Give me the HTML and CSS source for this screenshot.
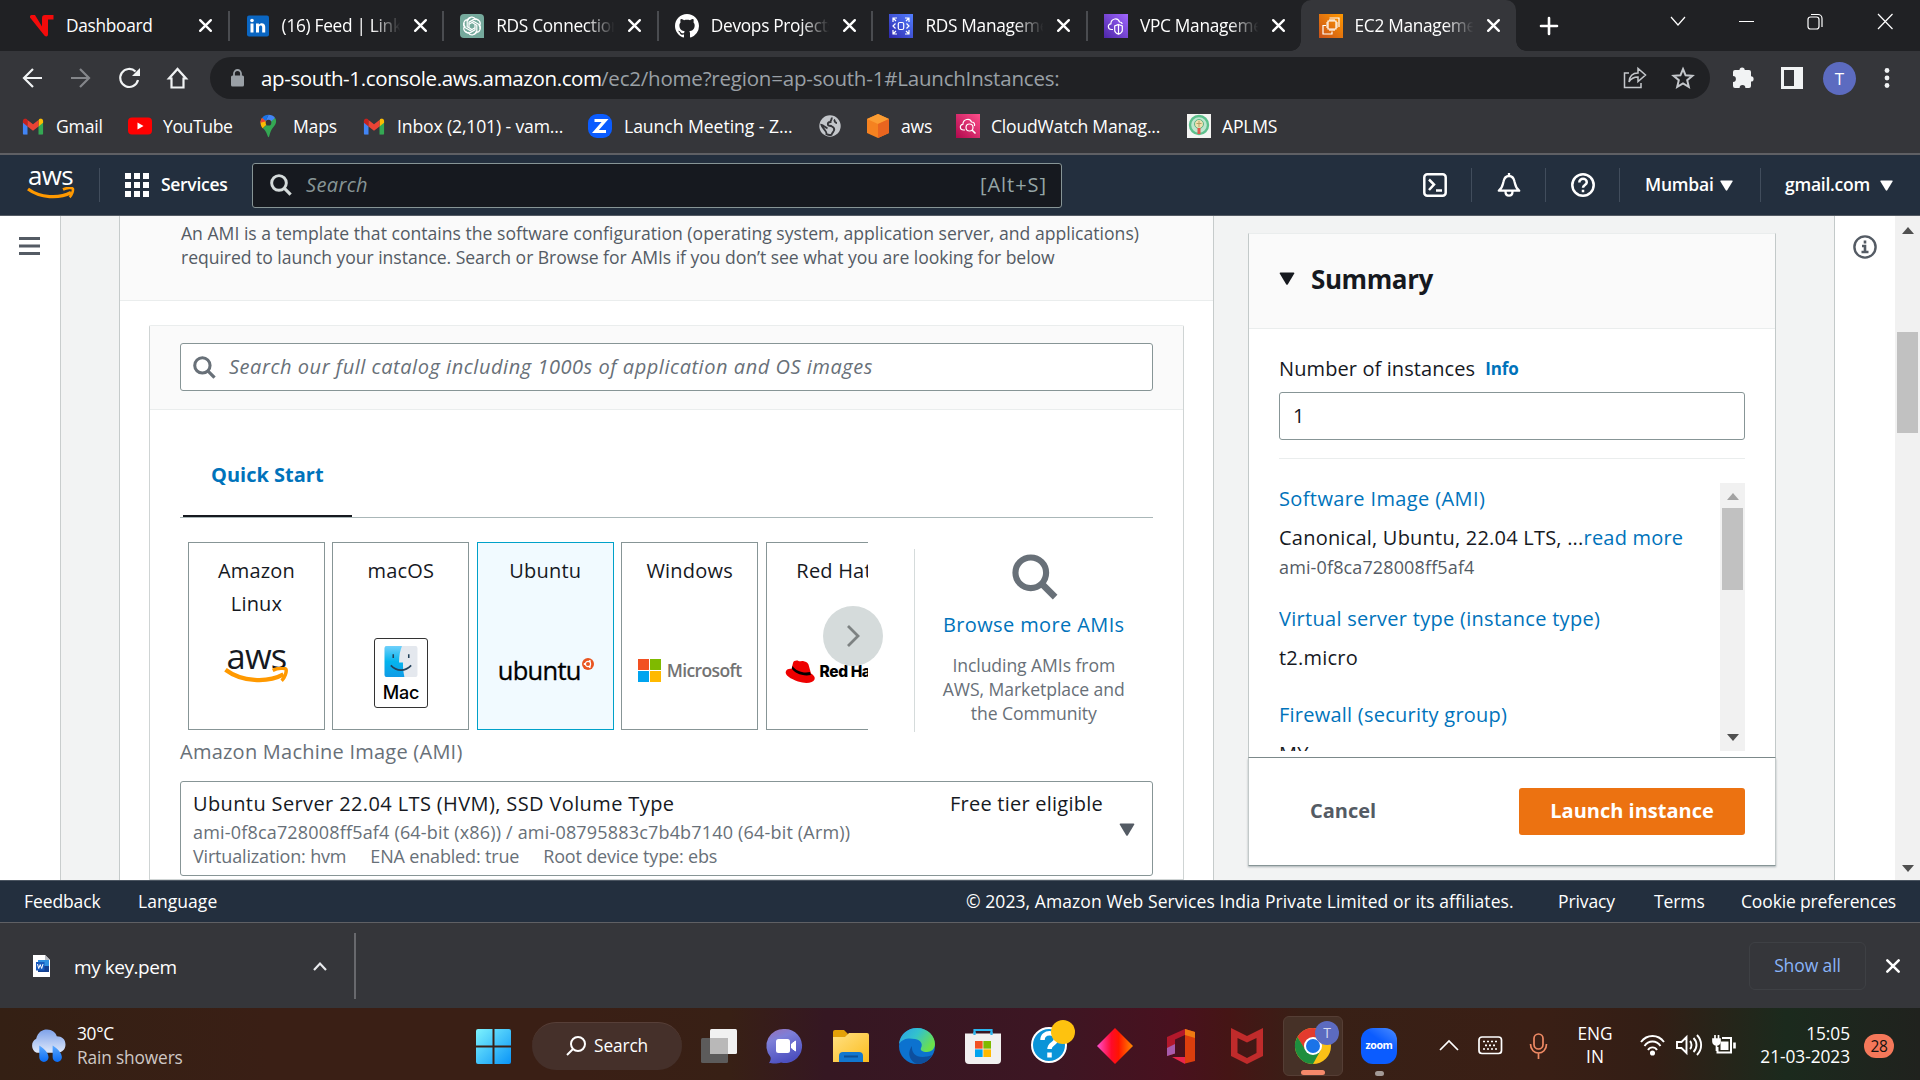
FILE: index.html
```
<!DOCTYPE html>
<html lang="en">
<head>
<meta charset="utf-8">
<title>EC2 Management Console</title>
<link rel="stylesheet" href="styles.css">
</head>
<body>
<svg class="defs" width="0" height="0" aria-hidden="true">
  <defs>
    <linearGradient id="gPurple" x1="0" y1="1" x2="1" y2="0"><stop offset="0" stop-color="#4d27a8"/><stop offset="1" stop-color="#a166ff"/></linearGradient>
    <linearGradient id="gBlue" x1="0" y1="1" x2="1" y2="0"><stop offset="0" stop-color="#2e27ad"/><stop offset="1" stop-color="#527fff"/></linearGradient>
    <linearGradient id="gOrange" x1="0" y1="1" x2="1" y2="0"><stop offset="0" stop-color="#c8511b"/><stop offset="1" stop-color="#f90"/></linearGradient>
    <linearGradient id="gPink" x1="0" y1="1" x2="1" y2="0"><stop offset="0" stop-color="#b0084d"/><stop offset="1" stop-color="#ff4f8b"/></linearGradient>
    <linearGradient id="gWin" x1="0" y1="0" x2="1" y2="1"><stop offset="0" stop-color="#7df3fd"/><stop offset="1" stop-color="#0a94f7"/></linearGradient>
    <linearGradient id="gCloud" x1="0" y1="0" x2="0" y2="1"><stop offset="0" stop-color="#7ea2ea"/><stop offset="1" stop-color="#dfe8fa"/></linearGradient>
    <linearGradient id="gDrop" x1="0" y1="0" x2="0" y2="1"><stop offset="0" stop-color="#5aa8ff"/><stop offset="1" stop-color="#0a6cf5"/></linearGradient>
    <linearGradient id="gFolder" x1="0" y1="0" x2="1" y2="1"><stop offset="0" stop-color="#ffe083"/><stop offset="1" stop-color="#fbbd1e"/></linearGradient>
    <linearGradient id="gChat" x1="0" y1="0" x2="0.4" y2="1"><stop offset="0" stop-color="#9a70b5"/><stop offset="0.35" stop-color="#7d7fd8"/><stop offset="1" stop-color="#4d50c0"/></linearGradient>
    <linearGradient id="gEdge" x1="0" y1="0" x2="1" y2="0.5"><stop offset="0" stop-color="#2a9fe8"/><stop offset="0.5" stop-color="#33c2cd"/><stop offset="1" stop-color="#6be04c"/></linearGradient>
    <linearGradient id="gDiamond" x1="0" y1="0" x2="1" y2="0"><stop offset="0" stop-color="#ff4fd0"/><stop offset="0.4" stop-color="#ff0a2a"/><stop offset="0.6" stop-color="#ff1500"/><stop offset="1" stop-color="#ff8a00"/></linearGradient>
    <linearGradient id="gMac" x1="0" y1="0" x2="0" y2="1"><stop offset="0" stop-color="#6fd0fb"/><stop offset="0.5" stop-color="#04b4ee"/><stop offset="1" stop-color="#0f9be6"/></linearGradient>
    <symbol id="x" viewBox="0 0 14 14"><path d="M2 2l10 10M12 2L2 12" stroke="currentColor" stroke-width="2.2" stroke-linecap="round" fill="none"/></symbol>
    <symbol id="gmail" viewBox="0 0 24 18"><path d="M1 3.5V17a1 1 0 0 0 1 1h4V8z" fill="#4285f4"/><path d="M23 3.5V17a1 1 0 0 1-1 1h-4V8z" fill="#34a853"/><path d="M18 2.5V9l5-4V2.800C23 .6 20.500-.6 18.800.8z" fill="#fbbc04"/><path d="M1 2.800V5l5 4V2L5.200.8C3.500-.6 1 .6 1 2.800z" fill="#c5221f"/><path d="M6 9V2l6 4.500L18 2v7l-6 4.500z" fill="#ea4335"/></symbol>
    <symbol id="smile" viewBox="0 0 48 16"><path d="M1 2c12 9 31 10 43 3.500" stroke="#f90" stroke-width="3.200" fill="none"/><path d="M36 2.500c4-2 9-2 9.800-.8.8 1.500-1 6.500-3.200 8.500" stroke="#f90" stroke-width="2.600" fill="none"/></symbol>
    <symbol id="mag" viewBox="0 0 24 24"><circle cx="9.800" cy="9.800" r="8" fill="none" stroke="currentColor" stroke-width="3.200"/><path d="M15.200 15.200L22.500 22.500" stroke="currentColor" stroke-width="3.400"/></symbol>
    <symbol id="down" viewBox="0 0 14 12"><path d="M1 .5h12a.8.8 0 0 1 .6 1.200L7.800 11.200a1 1 0 0 1-1.600 0L.4 1.700A.8.8 0 0 1 1 .5z" fill="currentColor"/></symbol>
    <symbol id="ms" viewBox="0 0 22 22"><path d="M0 0h10.500v10.500H0z" fill="#f25022"/><path d="M11.500 0H22v10.500H11.500z" fill="#7fba00"/><path d="M0 11.500h10.500V22H0z" fill="#00a4ef"/><path d="M11.500 11.500H22V22H11.500z" fill="#ffb900"/></symbol>
  </defs>
</svg>

<header class="tabs">
  <div class="tab"><svg class="fav" viewBox="0 0 24 24"><path d="M1.500 1h3.500L12 12.500V4c0-2 1-3 3-3h8.500v4.500H18v15c0 2.500-3 2.500-4 .5L0 3.500C-.3 2 .5 1 1.500 1z" fill="#f40b0b"/></svg><span class="ttl">Dashboard</span><svg class="close"><use href="#x"/></svg></div>
  <div class="tab"><svg class="fav" viewBox="0 0 24 24"><rect x="1" y="1.500" width="22" height="21" rx="2" fill="#0a66c2"/><path d="M4.500 9.500h3v9h-3zM10 9.500h2.900v1.300c1.500-2.400 6.300-2 6.300 2v5.700h-3v-5c0-2.600-3.200-2.400-3.200 0v5h-3z" fill="#fff"/><circle cx="6" cy="6.500" r="1.800" fill="#fff"/></svg><span class="ttl">(16) Feed | LinkedIn</span><svg class="close"><use href="#x"/></svg></div>
  <div class="tab"><svg class="fav" viewBox="0 0 24 24"><path d="M4 0h16a4 4 0 0 1 4 4v20H4a4 4 0 0 1-4-4V4a4 4 0 0 1 4-4z" fill="#75a99c"/><g fill="none" stroke="#fff" stroke-width="1.200"><path id="pet" d="M8 6.500a4 4 0 0 1 7.500-1.200M9 13.700V8.200l4.800-2.800a3.800 3.800 0 0 1 4.700 1.200"/><use href="#pet" transform="rotate(60 12 12)"/><use href="#pet" transform="rotate(120 12 12)"/><use href="#pet" transform="rotate(180 12 12)"/><use href="#pet" transform="rotate(240 12 12)"/><use href="#pet" transform="rotate(300 12 12)"/></g></svg><span class="ttl">RDS Connection</span><svg class="close"><use href="#x"/></svg></div>
  <div class="tab"><svg class="fav" viewBox="0 0 16 16"><path fill="#fff" d="M8 0C3.580 0 0 3.580 0 8c0 3.540 2.290 6.530 5.470 7.590.4.070.55-.17.55-.38 0-.19-.01-.82-.01-1.490-2.010.37-2.530-.49-2.690-.94-.09-.23-.48-.94-.82-1.130-.28-.15-.68-.52-.01-.53.63-.01 1.080.58 1.230.82.72 1.210 1.870.87 2.330.66.07-.52.28-.87.51-1.070-1.780-.2-3.640-.89-3.640-3.950 0-.87.31-1.590.82-2.150-.08-.2-.36-1.020.08-2.120 0 0 .67-.21 2.200.82.64-.18 1.320-.27 2-.27s1.360.09 2 .27c1.530-1.040 2.200-.82 2.200-.82.44 1.100.16 1.920.08 2.120.51.56.82 1.270.82 2.150 0 3.070-1.870 3.750-3.650 3.950.29.25.54.73.54 1.480 0 1.070-.01 1.930-.01 2.200 0 .21.15.46.55.38A8.010 8.010 0 0 0 16 8c0-4.420-3.580-8-8-8z"/></svg><span class="ttl">Devops Projects</span><svg class="close"><use href="#x"/></svg></div>
  <div class="tab"><svg class="fav" viewBox="0 0 24 24"><path d="M0 0h24v24H0z" fill="url(#gBlue)"/><path d="M4 8V4h4M4 4l3 3M16 4h4v4M20 4l-3 3M4 16v4h4M4 20l3-3M20 16v4h-4M20 20l-3-3M6.500 9.500L4 12l2.500 2.500M17.500 9.500L20 12l-2.500 2.500" fill="none" stroke="#fff" stroke-width="1.200"/><rect x="9.300" y="8.500" width="5.400" height="7" rx="1.500" fill="none" stroke="#fff" stroke-width="1.200"/></svg><span class="ttl">RDS Management</span><svg class="close"><use href="#x"/></svg></div>
  <div class="tab last"><svg class="fav" viewBox="0 0 24 24"><path d="M0 0h24v24H0z" fill="url(#gPurple)"/><path d="M9 15.500H7.500c-4 0-4.200-5.500-.6-5.700C7 4.500 14 3 15.500 8c1.800 0 2.500.8 2.800 2M14.500 10.500l3.800 1.500v4.500c0 1.500-2 3-3.800 3.800-1.800-.8-3.800-2.300-3.800-3.800V12zM14.500 10.500v9.800" fill="none" stroke="#fff" stroke-width="1.200"/></svg><span class="ttl">VPC Management</span><svg class="close"><use href="#x"/></svg></div>
  <div class="tab active"><svg class="fav" viewBox="0 0 24 24"><path d="M0 0h24v24H0z" fill="url(#gOrange)"/><path d="M9 7h8v8H9zM11 7V5M13 7V5M15 7V5M11 17v-2M13 17v-2M15 17v-2M9 9H7M9 11H7M9 13H7M19 9h-2M19 11h-2M19 13h-2M10.500 4H20v9M7 11.500H4V20h9v-2.500" fill="none" stroke="#fff" stroke-width="1.200"/></svg><span class="ttl">EC2 Management</span><svg class="close"><use href="#x"/></svg></div>
  <svg class="plus" viewBox="0 0 18 18"><path d="M9 1v16M1 9h16" stroke="#fff" stroke-width="2.600" stroke-linecap="round"/></svg>
  <svg class="winctl" viewBox="0 0 224 18" fill="none" stroke="#fff" stroke-width="1.200"><path d="M1 4l7 8 7-8M69 8.500h15M208 1l14.500 15M222.500 1L208 16"/><rect x="138" y="4" width="11" height="12" rx="2.500"/><path d="M141 1.500h7a4 4 0 0 1 4 4V14"/></svg>
</header>

<div class="toolbar">
  <svg class="nav" viewBox="0 0 168 22" fill="none" stroke="#f1f3f4" stroke-width="2.200"><path d="M20 11H2M11 2L2 11l9 9"/><path d="M49 11h17M58 2l9 9-9 9" stroke="#84868a"/><path d="M113.500 4.500A9 9 0 1 0 116 13"/><path d="M118 1v8h-8z" fill="#f1f3f4" stroke="none"/><path d="M149.500 20.500v-9H147L155.500 2l8.500 9.500h-2.500v9z"/></svg>
  <div class="omni">
    <svg class="lock" viewBox="0 0 13 18"><rect y="6.500" width="13" height="11" rx="1.500" fill="#9aa0a6"/><path d="M3 7V4.500a3.500 3.500 0 0 1 7 0V7" fill="none" stroke="#9aa0a6" stroke-width="1.800"/></svg>
    <span class="host">ap-south-1.console.aws.amazon.com</span><span class="path">/ec2/home?region=ap-south-1#LaunchInstances:</span>
    <svg class="share" viewBox="0 0 24 22"><path d="M6 6H1.500v14.500H18V16M6 15c.5-6 4-9 9-9V1.500L22.500 8 15 14.500V10c-4 0-7 1.500-9 5z" fill="none" stroke="#c4c7cb" stroke-width="1.500"/></svg>
    <svg class="star" viewBox="0 0 22 22"><path d="M11 2l2.600 6.300 6.800.5-5.200 4.400 1.600 6.600-5.800-3.500-5.800 3.500 1.600-6.600L1.600 8.800l6.800-.5z" fill="none" stroke="#c4c7cb" stroke-width="2"/></svg>
  </div>
  <svg class="puz" viewBox="0 0 22 22"><path d="M2 4h4.500a2.600 2.600 0 0 1 5.200 0H16a2 2 0 0 1 2 2v4.300a2.600 2.600 0 0 1 0 5.200V20a2 2 0 0 1-2 2h-3.600a2.900 2.900 0 0 0-5.800 0H2a2 2 0 0 1-2-2v-4.100a2.900 2.900 0 0 0 0-5.800V6a2 2 0 0 1 2-2z" fill="#f1f3f4"/></svg>
  <svg class="side" viewBox="0 0 22 22"><path fill-rule="evenodd" d="M0 0h22v22H0zM3 3v16h10V3z" fill="#f1f3f4"/></svg>
  <span class="avatar">T</span>
  <svg class="dots" viewBox="0 0 6 20" fill="#f1f3f4"><circle cx="3" cy="2.500" r="2.400"/><circle cx="3" cy="10" r="2.400"/><circle cx="3" cy="17.500" r="2.400"/></svg>
</div>

<nav class="bookmarks">
  <span class="bm b1"><svg viewBox="0 0 24 18" class="gm"><use href="#gmail"/></svg>Gmail</span>
  <span class="bm b2"><svg viewBox="0 0 24 18" class="yt"><rect y=".5" width="24" height="17" rx="4" fill="#f00"/><path d="M9.500 5.500v7l6-3.500z" fill="#fff"/></svg>YouTube</span>
  <span class="bm b3"><svg viewBox="0 0 18 24" class="mp"><path d="M9 0L5.500 7.500 12 9.500l4-6A8.500 8.500 0 0 0 9 0z" fill="#4285f4"/><path d="M2.200 3.500C-.5 7 .5 12 3 14.500L12 6 6 6.500z" fill="#fbbc04"/><path d="M9 0a8.500 8.500 0 0 0-6.800 3.500L6 7z" fill="#1a73e8"/><path d="M2.200 3.500C1 5 .5 6.800.5 8.500L6.500 7z" fill="#ea4335"/><path d="M16 3.500c3 5-1 8.500-3.500 12C10.500 18.500 10 24 9 24s-1.500-6-6-9.500z" fill="#34a853"/><circle cx="9" cy="8.500" r="3" fill="#35363a"/></svg>Maps</span>
  <span class="bm b4"><svg viewBox="0 0 24 18" class="gm"><use href="#gmail"/></svg>Inbox (2,101) - vam...</span>
  <span class="bm b5"><svg viewBox="0 0 24 24" class="sq"><rect width="24" height="24" rx="9" fill="#0b5cff"/><path d="M6.500 6.500H17L7.500 17.500H18" fill="none" stroke="#fff" stroke-width="3.200"/></svg>Launch Meeting - Z...</span>
  <span class="bm b6"><svg viewBox="0 0 22 22" class="gl"><circle cx="11" cy="11" r="10.700" fill="#c3c6ca"/><path d="M12.500 2.500c1 2-1 2.500-1 4.500-2.500 0-3 1.200-2.500 3 .3 1 2.500.5 4 1.500 1.500.8 2.800 2 2 4-.6 1.500-1.800 2-2.500 4.300-1.500.4-3.500.2-5-.6.5-2-1-3-2-4.500C4.500 13.500 3 12 2.500 10c2 .5 4 2.800 6 3.200M16 4.500c-1.500 1.500.5 3.500 2 3.500" fill="none" stroke="#35363a" stroke-width="1.900"/></svg></span>
  <span class="bm b7"><svg viewBox="0 0 24 24" class="sq"><path d="M12 0l11 5v14l-11 5L1 19V5z" fill="#f58220"/><path d="M12 0l11 5-11 5L1 5z" fill="#fb9d33"/><path d="M12 10l11-5v14l-11 5z" fill="#e9651f"/></svg>aws</span>
  <span class="bm b8"><svg viewBox="0 0 24 24" class="sq"><path d="M0 0h24v24H0z" fill="url(#gPink)"/><path d="M9 16H7.500c-4 0-4.200-5.500-.6-5.700C7 5 14 3.500 15.500 8c2.500 0 3.500 1.800 3 4" fill="none" stroke="#fff" stroke-width="1.200"/><circle cx="13.500" cy="13.500" r="3.500" fill="none" stroke="#fff" stroke-width="1.200"/><path d="M16 16l3.500 3.500" stroke="#fff" stroke-width="1.600"/></svg>CloudWatch Manag...</span>
  <span class="bm b9"><svg viewBox="0 0 24 24" class="sq"><path d="M0 0h24v24H0z" fill="#f4f4f2"/><circle cx="12" cy="11" r="9" fill="#bfe6cf" stroke="#5cc08c" stroke-width="2.400"/><circle cx="12" cy="10" r="4.500" fill="#efe0b0" stroke="#5cb585"/><path d="M12 7v6M9.500 9.500h5" stroke="#b3a165"/><path d="M12 14v6" stroke="#e2564c" stroke-width="3"/></svg>APLMS</span>
</nav>

<header class="aws">
  <div class="logo"><span>aws</span><svg viewBox="0 0 48 16"><use href="#smile"/></svg></div>
  <i class="sep s1"></i>
  <svg class="grid9" viewBox="0 0 24 24" fill="#fff"><path d="M0 0h6v6H0zM9 0h6v6H9zM18 0h6v6h-6zM0 9h6v6H0zM9 9h6v6H9zM18 9h6v6h-6zM0 18h6v6H0zM9 18h6v6H9zM18 18h6v6h-6z"/></svg>
  <span class="svc">Services</span>
  <div class="asearch"><svg class="m20"><use href="#mag"/></svg><em>Search</em><span class="alt">[Alt+S]</span></div>
  <svg class="ai" viewBox="0 0 24 24" fill="none" stroke="#fff" stroke-width="2.500"><rect x="1.300" y="1.300" width="21.400" height="21.400" rx="3"/><path d="M6 6.500l5 5-5 5.500M13 17.500h6"/></svg>
  <i class="sep"></i>
  <svg class="ai" viewBox="0 0 24 24" fill="none" stroke="#fff" stroke-width="2.300"><path d="M1.800 17.700C5.500 15 5.500 12.500 6.500 8.500 7.300 4.800 9.500 3 12 3s4.700 1.800 5.500 5.500c1 4 1 6.500 4.700 9.200zM12 0v3M8.500 18.500c0 5.500 7 5.500 7 0" stroke-linejoin="round"/></svg>
  <i class="sep"></i>
  <svg class="ai" viewBox="0 0 24 24" fill="none" stroke="#fff" stroke-width="2.500"><circle cx="12" cy="12" r="10.700"/><path d="M8.300 9.500c0-5 7.500-4.600 7.500-.3 0 2.800-3.800 2.800-3.800 5.600M12 16.700v2.600"/></svg>
  <i class="sep"></i>
  <span class="mum">Mumbai</span><svg class="tri"><use href="#down"/></svg>
  <i class="sep s2"></i>
  <span class="acct">gmail.com</span><svg class="tri"><use href="#down"/></svg>
</header>

<main class="console">
  <aside class="left"><svg viewBox="0 0 21 18"><path d="M0 1.500h21M0 9h21M0 16.500h21" stroke="#545b64" stroke-width="2.800"/></svg></aside>
  <section class="card">
    <div class="intro">An AMI is a template that contains the software configuration (operating system, application server, and applications)<br><span>required to launch your instance. Search or Browse for AMIs if you don’t see what you are looking for below</span></div>
    <div class="inner">
      <div class="cat"><div class="catbox"><svg class="m22"><use href="#mag"/></svg><em>Search our full catalog including 1000s of application and OS images</em></div></div>
      <div class="ibody">
        <div class="qs"><span>Quick Start</span></div>
        <div class="osrow">
          <div class="oslist">
            <div class="os">Amazon<br>Linux<div class="awslogo"><span>aws</span><svg viewBox="0 0 48 16"><use href="#smile"/></svg></div></div>
            <div class="os">macOS<div class="mac"><svg viewBox="0 0 34 32"><rect width="34" height="32" rx="2" fill="#e4e8ee"/><path d="M2 0h16c-2 5-3 10-3 17h4c0 6 .5 10 1.500 15H2a2 2 0 0 1-2-2V2a2 2 0 0 1 2-2z" fill="url(#gMac)"/><path d="M9 8.500v4M25 8.500v4" stroke="#23415a" stroke-width="1.600"/><path d="M6.500 20c6 6.500 15 6.500 21 0" fill="none" stroke="#23415a" stroke-width="1.700"/></svg><span>Mac</span></div></div>
            <div class="os sel">Ubuntu<div class="ubu"><span>ubuntu</span><svg viewBox="0 0 12 12"><circle cx="6" cy="6" r="6" fill="#e95420"/><circle cx="6" cy="6" r="2.600" fill="none" stroke="#fff" stroke-width="1.200"/><circle cx="2.600" cy="6" r="1" fill="#fff"/><circle cx="7.800" cy="3" r="1" fill="#fff"/><circle cx="7.800" cy="9" r="1" fill="#fff"/></svg></div></div>
            <div class="os">Windows<div class="msl"><svg><use href="#ms"/></svg><span>Microsoft</span></div></div>
            <div class="os">Red Hat<div class="rh"><svg viewBox="0 0 30 23"><path d="M1 11c-2 4 5 8 12 10.500 8 2.500 15 1.500 16.500-2 1-2.500-1-4.500-3.500-6L23.500 4.500C22.500 2 20 1.500 18 1c-2-.5-3 1-4.500 0S8.500.5 8 3L6.500 9C4 8.500 2 9.500 1 11z" fill="#e00"/><path d="M6.800 8.500c2 4 11 8.500 19 6.500l-.8-3c-6 1.500-14-.5-17.500-6z" fill="#000"/></svg><span>Red Hat</span></div></div>
          </div>
          <div class="next"><svg viewBox="0 0 14 24"><path d="M2 2l10 10L2 22" fill="none" stroke="#7d8282" stroke-width="2.800"/></svg></div>
          <div class="browse"><svg class="m44"><use href="#mag"/></svg><b>Browse more AMIs</b><p>Including AMIs from<br>AWS, Marketplace and<br>the Community</p></div>
        </div>
        <div class="amil">Amazon Machine Image (AMI)</div>
        <div class="amibox">
          <div class="amitxt"><div class="a1"><span>Ubuntu Server 22.04 LTS (HVM), SSD Volume Type</span><span class="free">Free tier eligible</span></div><div class="a2">ami-0f8ca728008ff5af4 (64-bit (x86)) / ami-08795883c7b4b7140 (64-bit (Arm))</div><div class="a3"><span>Virtualization: hvm</span><span>ENA enabled: true</span><span>Root device type: ebs</span></div></div>
          <svg class="dtri"><use href="#down"/></svg>
        </div>
      </div>
    </div>
  </section>
  <section class="summary">
    <div class="stop">
      <h2><svg><use href="#down"/></svg>Summary</h2>
      <div class="sbody">
        <div class="num">Number of instances<b>Info</b></div>
        <div class="numbox">1</div>
        <div class="scroll">
          <div class="stext">
            <p class="lk k1">Software Image (AMI)</p>
            <p class="vl">Canonical, Ubuntu, 22.04 LTS, ...<span class="lk">read more</span></p>
            <p class="sm">ami-0f8ca728008ff5af4</p>
            <p class="lk k2">Virtual server type (instance type)</p>
            <p class="vl">t2.micro</p>
            <p class="lk k3">Firewall (security group)</p>
            <p class="vl">MY</p>
          </div>
          <div class="sbar"><svg viewBox="0 0 12 7"><path d="M0 7l6-7 6 7z" fill="#a3a3a3"/></svg><i></i><svg class="dn" viewBox="0 0 12 7"><path d="M0 0l6 7 6-7z" fill="#505050"/></svg></div>
        </div>
      </div>
    </div>
    <div class="sfoot"><span class="cancel">Cancel</span><span class="launch">Launch instance</span></div>
  </section>
  <aside class="right"><svg viewBox="0 0 24 24" fill="none" stroke="#545b64"><circle cx="12" cy="12" r="10.600" stroke-width="2.400"/><path d="M12 5.500v3M9 11h3v6M8.500 17h7" stroke-width="2.600"/></svg></aside>
  <div class="vbar"><svg viewBox="0 0 12 7"><path d="M0 7l6-7 6 7z" fill="#505050"/></svg><i></i><svg class="dn" viewBox="0 0 12 7"><path d="M0 0l6 7 6-7z" fill="#505050"/></svg></div>
</main>

<footer class="foot"><span class="f1">Feedback</span><span class="f2">Language</span><span class="f3">© 2023, Amazon Web Services India Private Limited or its affiliates.</span><span class="f4">Privacy</span><span class="f5">Terms</span><span class="f6">Cookie preferences</span></footer>

<div class="dl">
  <svg class="doc" viewBox="0 0 17 22"><path d="M0 0h12l5 5v17H0z" fill="#fff"/><path d="M12 0v5h5z" fill="#b9bcc2"/><rect x="5" y="5" width="11" height="12" fill="#2f8fe0"/><rect x="5" y="11" width="11" height="6" fill="#123f91"/><rect x="3" y="7" width="8.500" height="8.500" fill="#185abd"/><path d="M4.500 9l1.200 4.500L7.200 9.500l1.500 4L10 9" fill="none" stroke="#fff"/></svg>
  <span class="fname">my key.pem</span>
  <svg class="up" viewBox="0 0 14 9"><path d="M1 8l6-6.500L13 8" fill="none" stroke="#e8eaed" stroke-width="2.200"/></svg>
  <i></i>
  <span class="all">Show all</span>
  <svg class="dx"><use href="#x"/></svg>
</div>

<div class="task">
  <svg class="wx" viewBox="0 0 36 33"><path d="M7.500 23A7.500 7.500 0 0 1 7 9.500C8.500 3 13 .5 17.500.5c5 0 8.500 3 9.500 6.500 5 0 8.500 3 8.500 8 0 4.500-3 8-8 8z" fill="url(#gCloud)"/><path d="M10 16c6 4 9 8 9 11.500a4.500 4.500 0 0 1-9 0zM23 16c6 4 9 8 9 11.500a4.500 4.500 0 0 1-9 0z" fill="url(#gDrop)"/></svg>
  <div class="wt"><span>30°C</span><span class="dim">Rain showers</span></div>
  <svg class="start" viewBox="0 0 35 35" fill="url(#gWin)"><path d="M2 0h14.500v16.500H0V2a2 2 0 0 1 2-2zM18.500 0H33a2 2 0 0 1 2 2v14.500H18.500zM0 18.500h16.500V35H2a2 2 0 0 1-2-2zM18.500 18.500H35V33a2 2 0 0 1-2 2H18.500z"/></svg>
  <div class="ts"><svg viewBox="0 0 20 20"><circle cx="12" cy="8" r="7" fill="none" stroke="#fff" stroke-width="2"/><path d="M7 13l-6 6" stroke="#fff" stroke-width="2"/></svg>Search</div>
  <div class="apps">
    <svg viewBox="0 0 36 36"><rect x="9" y="1" width="27" height="25" rx="1.500" fill="#f1f1f1"/><rect y="10" width="27" height="25" rx="1.500" fill="#5c5b5b"/><path d="M9 10h18v16H9z" fill="#b9b8b8"/></svg>
    <svg viewBox="0 0 36 36"><path d="M18 1a17 17 0 1 1-4 33.500c-4 1.500-9 1-12 .5 1.500-2 2-4 1.500-6A17 17 0 0 1 18 1z" fill="url(#gChat)"/><rect x="9" y="11" width="14" height="14" rx="2.500" fill="#fff"/><path d="M24.500 16l4-3v10l-4-3z" fill="#fff" stroke="#fff" stroke-linejoin="round"/></svg>
    <svg viewBox="0 0 36 36"><path d="M0 4a2 2 0 0 1 2-2h9l4 4-2 6H0z" fill="#e3a008"/><path d="M0 9h12l4-4h18a2 2 0 0 1 2 2v27H0z" fill="url(#gFolder)"/><path d="M6 34v-6a4 4 0 0 1 4-4h16a4 4 0 0 1 4 4v6z" fill="#1177cf"/><path d="M11 28.500h14" stroke="#0a4f94" stroke-width="2"/></svg>
    <svg viewBox="0 0 36 36"><circle cx="18" cy="18" r="18" fill="#0c72cf"/><path d="M0 16C1 6 9 0 18 0c11 0 18 8 18 16 0 5-4 8-8 8-5 0-7-2-6-4 2-4 0-8-6-9C10 10 4 10 0 16z" fill="url(#gEdge)"/><path d="M13 18c-1 9 7 14 20 9-3 6-8 9-15 9-6-2-11-10-5-18z" fill="#0d4f9e"/></svg>
    <svg viewBox="0 0 36 36"><path d="M9.500 7V2h17v5" fill="none" stroke="#2cb5ee" stroke-width="2.200"/><path d="M0 5.500h36V32a4 4 0 0 1-4 4H4a4 4 0 0 1-4-4z" fill="#f1f0f0"/><path d="M9.500 7V4M26.500 7V4" stroke="#2cb5ee" stroke-width="2.200"/><svg x="10" y="13" width="16" height="16"><use href="#ms"/></svg></svg>
    <svg viewBox="0 0 46 44" class="help"><circle cx="18" cy="25" r="17" fill="#0a94d8" stroke="#fff" stroke-width="2"/><path d="M11.500 20c0-9 14-8.500 13.500-1 0 5-6.500 4.500-6.500 10M18.500 32.500v5" fill="none" stroke="#fff" stroke-width="4.500"/><circle cx="32" cy="12" r="12" fill="#fec20f"/></svg>
    <svg viewBox="0 0 36 36"><path d="M18 0l18 18-18 18L0 18z" fill="url(#gDiamond)"/></svg>
    <svg viewBox="0 0 36 36"><path d="M4 9L22 1v6l-10 4.500v14L4 28z" fill="#b3182b"/><path d="M4 20l8-4v9.500L4 28z" fill="#a85bab"/><path d="M22 1l10 3v29l-10 2.500z" fill="#dc3e0d"/><path d="M22 1l10 3v6l-10-3z" fill="#f07a12"/><path d="M9 29h13v7z" fill="#e8264b"/></svg>
    <svg viewBox="0 0 36 36"><path fill-rule="evenodd" d="M2 0l16 8 16-8v28l-16 8L2 28zM8.500 10v15l9.500 5 9.500-5V10L18 14.500z" fill="#c02b2b"/></svg>
    <div class="chrome"><svg viewBox="0 0 36 36"><circle cx="18" cy="18" r="18" fill="#fbc116"/><path d="M18 9.500h15.800A18 18 0 0 0 2.400 9l7.600 13z" fill="#e33b2e"/><path d="M2.400 9A18 18 0 0 0 18 36l7.500-13.500-15-.5z" fill="#1e8e3e"/><circle cx="18" cy="18" r="9" fill="#fff"/><circle cx="18" cy="18" r="7" fill="#1a73e8"/></svg><span class="tb">T</span><i></i></div>
    <div class="zm"><span>zoom</span><i></i></div>
  </div>
  <svg class="tray1" viewBox="0 0 110 32" fill="none" stroke="#fff" stroke-width="1.700"><path d="M1 20l9-9 9 9"/><rect x="40" y="7" width="22.500" height="16.500" rx="3"/><path d="M44 11.500h15M44 19h15M46 15.300h11" stroke-dasharray="2 2"/><g stroke="#f08a64"><rect x="95" y="4" width="9" height="15" rx="4.500"/><path d="M91.500 14c0 12 16 12 16 0M99.500 23v6"/></g></svg>
  <div class="lang"><span>ENG</span><span>IN</span></div>
  <svg class="tray2" viewBox="0 0 96 24" fill="none" stroke="#fff" stroke-width="1.900"><path d="M1 9c6-8 17-8 23 0M4.500 13c4-6 12-6 16 0M8 17c2-3.500 7-3.500 9 0"/><circle cx="12.500" cy="20" r="1.600" fill="#fff"/><path d="M37 9h4.500l5-5v16l-5-5H37zM50 8c2 2 2 6 0 8M53.500 5c4 4 4 10 0 14M57 2c5.500 6 5.500 14 0 20"/><path d="M82 5h9v14.500H77.500V14" stroke-width="2"/><path d="M94.500 9.500v6" stroke-width="2.600"/><path d="M80.500 8.500h8v8.500h-8z" fill="#fff" stroke="none"/><path d="M73 6h7v2.500a3.500 3.500 0 0 1-7 0zM75 2v4M78.500 2v4M76.500 12v6" stroke-width="1.700" fill="#fff"/></svg>
  <div class="clock"><span>15:05</span><span>21-03-2023</span></div>
  <span class="badge">28</span>
</div>
</body>
</html>
```
FILE: styles.css
```
* { box-sizing: border-box; }
html, body { margin: 0; }
body { width: 1920px; height: 1080px; overflow: hidden; display: flex; flex-direction: column; font-family: "Open Sans", "Noto Sans", sans-serif; font-size: 20px; line-height: 1; color: #16191f; background: #35363a; white-space: nowrap; }
svg { display: block; flex: none; overflow: visible; }
.defs { position: absolute; }
p, h2 { margin: 0; font-weight: 400; }
i { display: block; flex: none; }

/* tab strip */
.tabs { height: 51px; flex: none; display: flex; align-items: center; background: #202124; padding-left: 15px; color: #fff; font-size: 17.300px; letter-spacing: -.3px; }
.tab { width: 214.600px; height: 30px; flex: none; display: flex; align-items: center; padding-left: 16px; border-right: 2px solid #4a4c50; }
.tab:first-child { padding-left: 15px; }
.tab.last { border-color: transparent; }
.fav { width: 24px; height: 24px; }
.ttl { width: 121px; line-height: 26px; margin-left: 12px; overflow: hidden; -webkit-mask-image: linear-gradient(90deg, #000 74%, transparent 98%); mask-image: linear-gradient(90deg, #000 74%, transparent 98%); }
.tab:first-child .ttl { width: 122px; -webkit-mask-image: none; mask-image: none; }
.close { width: 15px; height: 15px; margin-left: 10px; }
.tab.active { height: 51px; width: 215px; margin-left: -2px; background: #35363a; border: 0; border-radius: 10px 10px 0 0; padding-left: 18px; position: relative; }
.tab.active::before, .tab.active::after { content: ""; position: absolute; bottom: 0; width: 10px; height: 10px; }
.tab.active::before { left: -10px; background: radial-gradient(circle at 0 0, transparent 9.500px, #35363a 10px); }
.tab.active::after { right: -10px; background: radial-gradient(circle at 100% 0, transparent 9.500px, #35363a 10px); }
.plus { width: 18px; height: 18px; margin-left: 24px; }
.winctl { width: 224px; height: 18px; margin: -7px 26px 0 auto; }

/* address row */
.toolbar { height: 54px; flex: none; display: flex; align-items: center; padding-left: 22px; }
.nav { width: 168px; height: 22px; }
.omni { width: 1500px; height: 42px; margin-left: 20px; border-radius: 21px; background: #202124; display: flex; align-items: center; padding: 0 16px 0 21px; color: #fff; font-size: 20.500px; }
.lock { width: 13px; height: 18px; margin-right: 17px; }
.host { width: 340px; letter-spacing: -.37px; }
.path { letter-spacing: -.2px; color: #9aa0a6; }
.share { width: 24px; height: 22px; margin-left: auto; }
.star { width: 22px; height: 22px; margin-left: 25px; }
.puz { width: 22px; height: 24px; margin: -2px 0 0 23px; }
.side { width: 22px; height: 22px; margin-left: 26px; }
.avatar { width: 33px; height: 33px; border-radius: 50%; background: #5c6bc0; color: #fff; font-size: 17px; display: flex; align-items: center; justify-content: center; margin-left: 20px; }
.dots { width: 6px; height: 20px; margin-left: 28px; }

/* bookmarks */
.bookmarks { height: 50px; flex: none; display: flex; align-items: center; padding: 0 0 6px 22px; border-bottom: 2px solid #5f6064; color: #fff; font-size: 17.600px; letter-spacing: -.22px; }
.bm { display: flex; align-items: center; flex: none; line-height: 26px; }
.gm { width: 22px; height: 17px; margin-right: 12px; }
.yt { width: 24px; height: 18px; margin-right: 11px; }
.mp { width: 17px; height: 24px; margin-right: 16px; }
.sq { width: 24px; height: 24px; margin-right: 11px; }
.gl { width: 22px; height: 22px; }
.b1 { width: 106px; } .b2 { width: 132px; letter-spacing: -.4px; } .b3 { width: 103px; } .b4 { width: 225px; letter-spacing: -.15px; } .b5 { width: 231px; letter-spacing: -.05px; } .b6 { width: 47px; } .b7 { width: 90px; } .b8 { width: 231px; }
.b5 .sq { margin-right: 12px; }

/* console header */
.aws { height: 61px; flex: none; display: flex; align-items: center; background: #232f3e; border-bottom: 1px solid #545b64; color: #fff; padding-left: 26px; font-size: 17.500px; font-weight: 600; }
.logo { width: 49px; height: 36px; display: flex; flex-direction: column; align-items: center; line-height: 20px; }
.logo span { font-size: 26px; font-weight: 500; letter-spacing: -.7px; height: 20px; line-height: 17px; }
.logo svg { width: 48px; height: 16px; }
.sep { width: 1px; height: 34px; background: #414d5c; margin: 0 25px 0 24px; }
.sep.s2 { margin: 0 24px 0 27px; }
.grid9 { width: 24px; height: 24px; }
.svc { width: 66px; margin: 0 25px 0 12px; letter-spacing: -.3px; }
.asearch { width: 810px; height: 45px; border: 1px solid #879596; border-radius: 3px; background: #16191f; display: flex; align-items: center; padding: 0 14px 0 17px; font-size: 20px; font-weight: 400; color: #879596; margin-right: 361px; line-height: 26px; }
.m20 { width: 22px; height: 22px; color: #d5dbdb; margin-right: 14px; }
.asearch em { letter-spacing: .36px; }
.alt { margin-left: auto; color: #95a5a6; letter-spacing: .95px; }
.ai { width: 24px; height: 24px; }
.mum { width: 66px; letter-spacing: -.2px; }
.acct { width: 86px; letter-spacing: -.25px; }
.tri { width: 13px; height: 11px; margin-left: 9px; }

/* console content */
.console { height: 664px; flex: none; display: flex; background: #f2f3f3; overflow: hidden; }
.left { width: 61px; background: #fff; border-right: 1px solid #c9cdcd; padding: 21px 0 0 19px; }
.left svg { width: 21px; height: 18px; }
.card { width: 1095px; margin-left: 58px; background: #fff; border: solid #c6cbcb; border-width: 0 1px; display: flex; flex-direction: column; }
.intro { height: 85px; flex: none; background: #fafafa; border-bottom: 1px solid #eaeded; padding: 5px 0 0 61px; font-size: 17.600px; line-height: 24px; letter-spacing: 0; color: #545b64; }
.intro span { letter-spacing: -.05px; }
.inner { height: 600px; margin: 24px 29px 0; border: 1px solid #cfd4d4; border-top-color: #eaeded; border-radius: 2px 2px 0 0; }
.cat { height: 84px; background: #fafafa; border-bottom: 1px solid #eaeded; padding: 17px 30px 0; }
.catbox { height: 48px; background: #fff; border: 1px solid #879596; border-radius: 3px; display: flex; align-items: center; padding-left: 12px; color: #687078; }
.m22 { width: 23px; height: 23px; margin-right: 13px; }
.catbox em { letter-spacing: .54px; line-height: 26px; }
.ibody { padding: 0 30px; }
.qs { height: 108px; border-bottom: 1px solid #aab7b8; color: #0073bb; font-weight: 700; padding-left: 3px; }
.qs span { display: block; width: 169px; height: 107px; border-bottom: 2px solid #16191f; padding: 55px 0 0 28px; }
.osrow { display: flex; height: 213px; padding: 24px 0 0 8px; }
.oslist { width: 681px; height: 190px; overflow: hidden; display: flex; gap: 7.400px; }
.os { width: 137px; height: 188px; flex: none; border: 1px solid #879596; text-align: center; line-height: 33px; padding-top: 11px; letter-spacing: .2px; display: flex; flex-direction: column; align-items: center; }
.os.sel { border-color: #00a1c9; background: #f1faff; }
.awslogo { height: 44px; display: flex; flex-direction: column; align-items: center; margin-top: 25px; letter-spacing: -.8px; }
.awslogo span { font-size: 34.500px; line-height: 22px; height: 26px; font-weight: 500; }
.awslogo svg { width: 65px; height: 21.600px; }
.mac { width: 54px; height: 70px; margin-top: 51px; border: 1px solid #333; border-radius: 3px; background: #fff; display: flex; flex-direction: column; align-items: center; padding-top: 7px; }
.mac svg { width: 34px; height: 31px; }
.mac span { font: 500 18px/32px Inter, sans-serif; letter-spacing: -.2px; color: #000; }
.ubu { display: flex; margin: 71px 0 0 1px; }
.ubu span { font-size: 25.500px; line-height: 24px; letter-spacing: -.7px; color: #000; -webkit-text-stroke: .3px #000; }
.ubu svg { width: 12px; height: 12px; margin-left: 1px; }
.msl { display: flex; align-items: center; gap: 6px; margin-top: 71px; height: 25px; }
.msl svg { width: 23px; height: 23px; }
.msl span { color: #737373; font-weight: 600; font-size: 17.500px; letter-spacing: -.6px; }
.rh { display: flex; align-items: center; align-self: flex-start; gap: 5px; margin: 73px 0 0 18px; height: 23px; }
.rh svg { width: 30px; height: 23px; }
.rh span { font: 800 15.500px/23px Inter, sans-serif; color: #000; letter-spacing: -.4px; }
.next { width: 60px; height: 60px; border-radius: 50%; background: #d5dbdb; margin: 64px 0 0 -45px; position: relative; flex: none; display: flex; align-items: center; justify-content: center; }
.next svg { width: 14px; height: 24px; }
.browse { width: 240px; height: 183px; margin: 7px 0 0 31px; border-left: 1px solid #d5dbdb; display: flex; flex-direction: column; align-items: center; padding-top: 5px; }
.m44 { width: 46px; height: 46px; color: #687078; margin-left: 3px; }
.browse b { font-weight: 400; color: #0073bb; letter-spacing: .38px; margin-top: 13px; line-height: 24px; }
.browse p { font-size: 17.600px; line-height: 24px; letter-spacing: -.08px; color: #687078; text-align: center; margin-top: 16px; }
.amil { color: #687078; letter-spacing: .24px; line-height: 28px; height: 50px; padding-top: 7px; }
.amibox { height: 95px; border: 1px solid #879596; border-radius: 3px; display: flex; padding: 8px 17px 0 12px; }
.amitxt { width: 913px; }
.a1 { display: flex; justify-content: space-between; line-height: 28px; letter-spacing: .38px; height: 30px; }
.free { letter-spacing: .24px; }
.a2, .a3 { font-size: 18px; line-height: 24px; letter-spacing: .18px; color: #687078; }
.a3 { display: flex; gap: 24px; letter-spacing: -.17px; }
.dtri { width: 16px; height: 13px; margin: 33px 0 0 16px; color: #545b64; }

/* summary panel */
.summary { width: 528px; margin: 17px 0 0 34px; flex: none; }
.stop { height: 525px; background: #fff; border: 1px solid #c3c9c9; border-top-color: #eaeded; border-bottom-color: #7f8c8d; overflow: hidden; }
.stop h2 { height: 95px; background: #fafafa; border-bottom: 1px solid #eaeded; font-size: 26px; font-weight: 700; letter-spacing: -.4px; display: flex; align-items: center; padding: 0 0 5px 30px; gap: 16px; line-height: 36px; }
.stop h2 svg { width: 16px; height: 13px; }
.sbody { padding: 0 30px; }
.num { padding-top: 26px; height: 63px; line-height: 28px; letter-spacing: .1px; display: flex; align-items: center; padding-bottom: 10px; }
.num b { font-size: 17px; color: #0073bb; margin: 1px 0 0 10px; letter-spacing: -.1px; }
.numbox { height: 48px; border: 1px solid #879596; border-radius: 3px; padding-left: 13px; line-height: 46px; }
.scroll { margin-top: 18px; border-top: 1px solid #eaeded; padding-top: 25px; display: flex; justify-content: space-between; }
.stext { height: 267px; overflow: hidden; line-height: 28px; }
.lk { color: #0073bb; }
.stext .lk { letter-spacing: .29px; }
.vl { margin-top: 11px; letter-spacing: .22px; height: 28px; }
.vl .lk { letter-spacing: .2px; }
.sm { font-size: 18px; letter-spacing: .13px; line-height: 24px; margin-top: 3px; color: #545b64; }
.k1 { height: 29px; padding-top: 1px; }
.stext .k1 { letter-spacing: .38px; }
.k2 { margin-top: 26px; } .k3 { margin-top: 29px; }
.stext .k3 { letter-spacing: .24px; }
.sbar, .vbar { background: #f1f1f1; display: flex; flex-direction: column; align-items: center; }
.sbar { width: 25px; height: 268px; margin-top: -1px; padding: 10px 0; }
.sbar svg, .vbar svg { width: 12px; height: 7px; }
.sbar i { width: 21px; height: 82px; background: #c1c1c1; margin-top: 8px; }
.sbar .dn, .vbar .dn { margin-top: auto; }
.sfoot { height: 108px; background: #fff; border: solid #c3c9c9; border-width: 0 1px 1px; border-bottom-color: #879596; box-shadow: 0 1px 2px rgba(0,28,36,.3); display: flex; justify-content: space-between; align-items: center; padding: 0 30px 0 61px; font-weight: 700; }
.cancel { color: #545b64; letter-spacing: 0; line-height: 22px; margin-top: -1px; }
.launch { width: 226px; height: 47px; background: #ec7211; color: #fff; border-radius: 3px; line-height: 46px; text-align: center; }
.right { width: 61px; margin-left: 58px; background: #fff; border-left: 1px solid #c3c9c9; padding: 19px 0 0 18px; }
.right svg { width: 24px; height: 24px; }
.vbar { width: 25px; padding: 11px 0 8px; }
.vbar i { width: 21px; height: 101px; background: #c1c1c1; margin-top: 98px; }

/* console footer */
.foot { height: 43px; flex: none; background: #232f3e; border-top: 1px solid #4b5561; border-bottom: 1px solid #5f6064; color: #fff; font-size: 17.500px; font-weight: 500; display: flex; align-items: center; padding: 0 0 2px 24px; }
.foot span { line-height: 28px; letter-spacing: -.1px; }
.f1 { width: 114px; } .f2 { width: 828px; } .foot .f2 { letter-spacing: .05px; } .foot .f3 { width: 592px; letter-spacing: .08px; } .f4 { width: 96px; } .f5 { width: 87px; } .foot .f6 { letter-spacing: -.15px; }

/* downloads */
.dl { height: 85px; flex: none; display: flex; align-items: center; padding-left: 33px; color: #fff; }
.doc { width: 17px; height: 22px; }
.fname { width: 239px; margin: 2px 0 0 24px; font-size: 19px; letter-spacing: -.45px; line-height: 28px; }
.up { width: 14px; height: 9px; margin-top: 1px; }
.dl i { width: 2px; height: 66px; background: #68696d; margin-left: 27px; }
.all { width: 117px; height: 48px; margin-left: auto; border: 1px solid #3e4044; border-radius: 6px; color: #8ab4f8; font-size: 17.500px; letter-spacing: -.1px; line-height: 44px; text-align: center; }
.dx { width: 16px; height: 16px; margin: 0 19px 0 19px; }

/* taskbar */
.task { height: 72px; flex: none; background: linear-gradient(90deg, #342014 0, #3a1f15 14%, #3a1f15 30%, #382015 38%, #351722 43%, #3d1623 55%, #48111f 61%, #451515 64%, #382016 68%, #3a1f15 80%, #331e15 86%, #1b2a1d 93%, #20221e 100%); display: flex; align-items: center; padding: 4px 0 0 29px; color: #fff; font-size: 17.300px; letter-spacing: -.3px; }
.wx { width: 37px; height: 34px; }
.wt, .lang, .clock { display: flex; flex-direction: column; line-height: 24px; margin-top: -1px; }
.wt { width: 399px; margin-left: 11px; }
.dim { color: #cfc8c5; letter-spacing: -.14px; }
.start { width: 35px; height: 35px; }
.ts { width: 150px; height: 48px; margin: -1px 0 0 21px; border-radius: 24px; background: #45302a; border-top: 1px solid #573f38; display: flex; align-items: center; gap: 8px; padding-left: 34px; letter-spacing: -.1px; }
.ts svg { width: 20px; height: 20px; }
.apps { display: flex; align-items: center; margin-left: 19px; gap: 30px; }
.apps > svg { width: 36px; height: 36px; }
.apps > .help { width: 46px; height: 44px; margin: -8px -10px 0 0; }
.chrome { width: 60px; height: 60px; margin: 0 -12px 0 -12px; border-radius: 6px; background: #463127; border: 1px solid #553e35; position: relative; display: flex; align-items: center; justify-content: center; }
.chrome svg { width: 36px; height: 36px; }
.chrome i, .zm i { position: absolute; background: #f4896a; border-radius: 3px; width: 24px; height: 5px; bottom: 0; left: 17px; }
.tb { position: absolute; right: 3px; top: 4px; width: 24px; height: 24px; border-radius: 50%; background: #5c6bc0; color: #d5d9f0; font-size: 14px; line-height: 24px; text-align: center; }
.zm { width: 36px; height: 36px; border-radius: 12px; background: linear-gradient(215deg, #4c8dff 0, #0b5cff 40%); position: relative; font-weight: 700; font-size: 10.500px; line-height: 34px; text-align: center; }
.zm i { width: 9px; left: 14px; bottom: -12px; background: #a39a96; }
.tray1 { width: 110px; height: 32px; margin: -1px 0 0 42px; }
.lang { width: 36px; align-items: center; margin: -2px 0 0 28px; line-height: 23px; letter-spacing: 0; }
.tray2 { width: 96px; height: 24px; margin: -2px 0 0 27px; }
.clock { width: 92px; margin: -2px 0 0 22px; align-items: flex-end; line-height: 23px; letter-spacing: -.05px; }
.badge { width: 30px; height: 24px; border-radius: 12px; background: #f4785a; color: #16110f; margin: -1px 0 0 14px; font-size: 15.500px; line-height: 24px; text-align: center; }
```
